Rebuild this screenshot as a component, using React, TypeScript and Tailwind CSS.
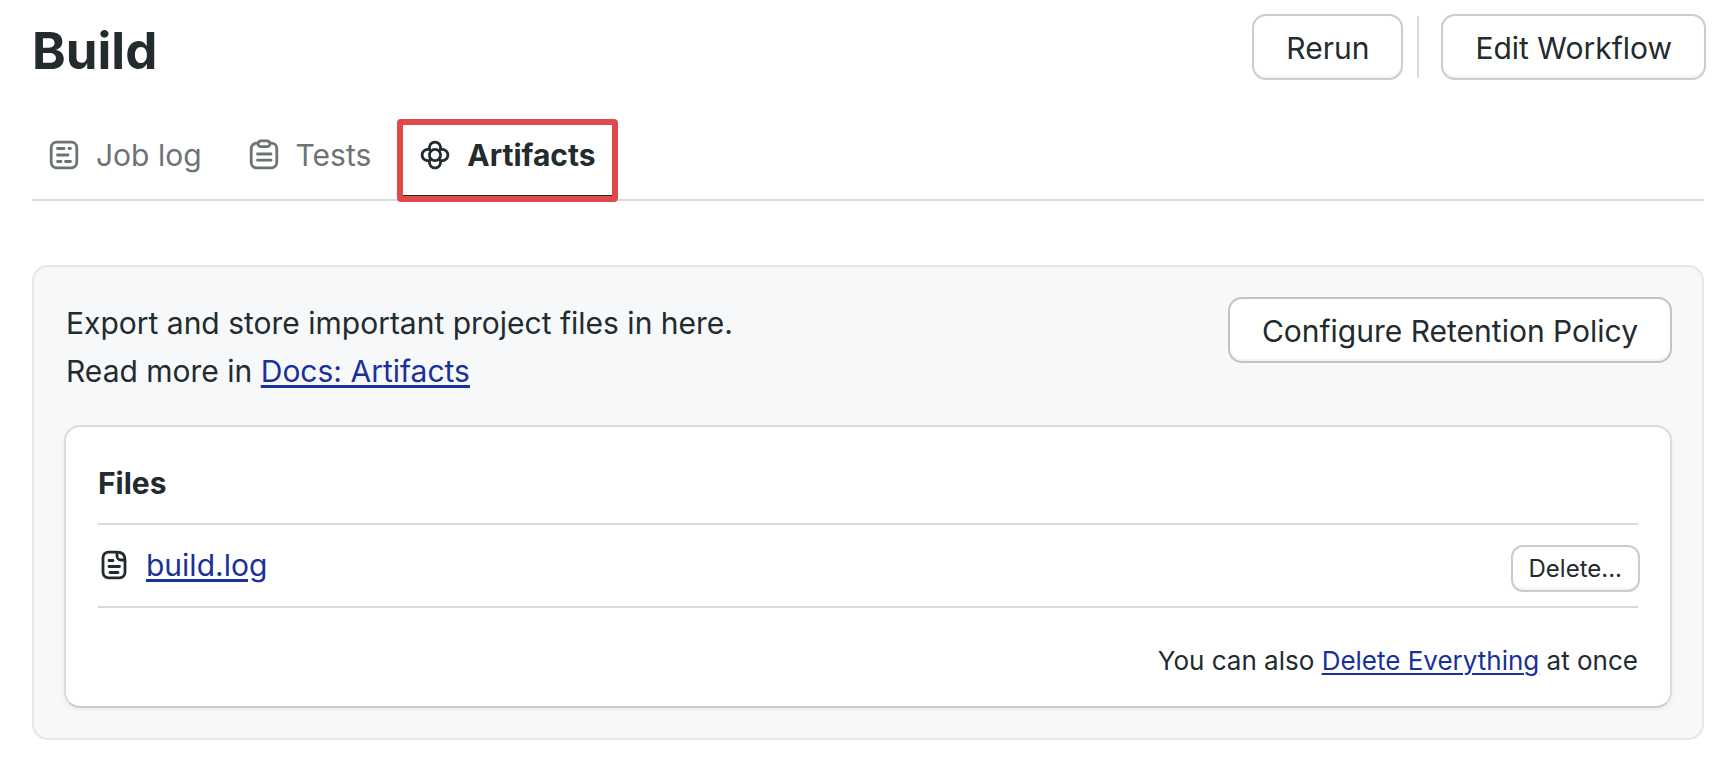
import type { ReactNode, SVGProps } from 'react';

type IconProps = SVGProps<SVGSVGElement>;

function Icon({ children, ...rest }: IconProps) {
  return (
    <svg
      width="32"
      height="32"
      viewBox="0 0 32 32"
      fill="none"
      stroke="currentColor"
      strokeWidth="2.8"
      strokeLinecap="round"
      strokeLinejoin="round"
      aria-hidden="true"
      className="shrink-0"
      {...rest}
    >
      {children}
    </svg>
  );
}

const JobLogIcon = () => (
  <Icon>
    <rect x="3.2" y="3.2" width="25.6" height="25.6" rx="5.5" />
    <path d="M9.5 9.5h6.5M21 9.5h1.5M9.5 16h10.5M9.5 22.5h3.5M17.5 22.5h5" />
  </Icon>
);

const TestsIcon = () => (
  <Icon>
    <path d="M10 4.2H8.7a5.5 5.5 0 0 0-5.5 5.5v13.6a5.5 5.5 0 0 0 5.5 5.5h14.6a5.5 5.5 0 0 0 5.5-5.5V9.7a5.5 5.5 0 0 0-5.5-5.5H22" />
    <rect x="10" y="1.8" width="12" height="5.8" rx="2.9" />
    <path d="M9.5 15h13.5M9.5 21.2h13.5" />
  </Icon>
);

const ArtifactsIcon = () => (
  <Icon>
    <circle cx="16" cy="16" r="5.6" />
    <path d="M10.8 10.8a5.6 5.6 0 1 1 10.4 0a5.6 5.6 0 1 1 0 10.4a5.6 5.6 0 1 1-10.4 0a5.6 5.6 0 1 1 0-10.4z" />
  </Icon>
);

const FileIcon = () => (
  <Icon>
    <path d="M19 3.2H10.5a5.5 5.5 0 0 0-5.5 5.5v14.6a5.5 5.5 0 0 0 5.5 5.5h11a5.5 5.5 0 0 0 5.5-5.5V11c0-5-3-7.8-8-7.8z" />
    <path d="M19 3.5v3.5a4 4 0 0 0 4 4h3.8" />
    <path d="M11 11.5h4M11 17.5h10.5M12 23.5h8" />
  </Icon>
);

const BUTTON =
  'cursor-pointer border-2 bg-white whitespace-nowrap shadow-[inset_0_-2px_1px_rgba(0,0,0,0.05)]';

function Button({ children, onGray = false }: { children: ReactNode; onGray?: boolean }) {
  return (
    <button
      type="button"
      className={`${BUTTON} h-[66px] rounded-[14px] px-8 pt-0.5 text-[30px] ${onGray ? 'border-[#c2c3c7]' : 'border-[#cccccc]'}`}
    >
      {children}
    </button>
  );
}

function Link({ children, small = false }: { children: ReactNode; small?: boolean }) {
  return (
    <a
      href="#"
      className={`text-[#1a3199] underline underline-offset-[3px] ${small ? 'decoration-2' : 'decoration-[3px]'}`}
    >
      {children}
    </a>
  );
}

export default function App() {
  return (
    <div className="bg-white pt-[14px] pr-7 pb-6 pl-8 font-['Inter',sans-serif] text-[30px] leading-[48px] text-[#222b2e]">
      <header className="-mr-0.5 flex items-start justify-between">
        <h1 className="text-[51px] leading-[74px] font-bold">Build</h1>
        <div className="flex items-center gap-[14px]">
          <Button>Rerun</Button>
          <div className="mr-2 h-[62px] w-[2px] bg-[#d9d9d9]" />
          <Button>Edit Workflow</Button>
        </div>
      </header>

      <nav className="mt-[31px] flex h-[82px] items-stretch border-b-2 border-[#d9dada] text-[#6b7375]">
        <a href="#" className="flex items-center gap-4 px-4 pb-2">
          <JobLogIcon />
          Job log
        </a>
        <a href="#" className="ml-3.5 flex items-center gap-4 px-4 pb-2">
          <TestsIcon />
          Tests
        </a>
        <a
          href="#"
          aria-current="page"
          className="-mb-[3px] ml-2.5 flex rounded-[4px] border-[6px] border-[#e0484b] font-bold text-[#222b2e]"
        >
          <span className="flex items-center gap-4 border-b border-[#222b2e] px-4 pb-2.5">
            <ArtifactsIcon />
            Artifacts
          </span>
        </a>
      </nav>

      <main className="mt-16 rounded-[16px] border-2 border-[#e4e6e7] bg-[#f6f8fa] p-[30px]">
        <div className="flex items-start justify-between">
          <p className="pt-0.5 pl-0.5">
            Export and store important project files in here.
            <br />
            Read more in <Link>Docs: Artifacts</Link>
          </p>
          <Button onGray>Configure Retention Policy</Button>
        </div>

        <section className="mt-[30px] rounded-[16px] border-2 border-[#d9dbdd] border-b-[#c9cbcd] bg-white px-8 pt-8 shadow-[0_2px_4px_rgba(0,0,0,0.06)]">
          <h2 className="border-b-2 border-[#d9d9d9] pb-4 font-bold">Files</h2>
          <div className="-mr-0.5 flex items-center justify-between">
            <div className="flex items-center gap-4 pb-0.5">
              <FileIcon />
              <Link>build.log</Link>
            </div>
            <button
              type="button"
              className={`${BUTTON} mt-5 mb-[14px] h-[47px] rounded-[12px] border-[#cccccc] px-4 text-[24px] leading-none`}
            >
              Delete...
            </button>
          </div>
          <p className="border-t-2 border-[#d9d9d9] pt-[33px] pb-[25px] text-right text-[26px] leading-[40px]">
            You can also <Link small>Delete Everything</Link> at once
          </p>
        </section>
      </main>
    </div>
  );
}
